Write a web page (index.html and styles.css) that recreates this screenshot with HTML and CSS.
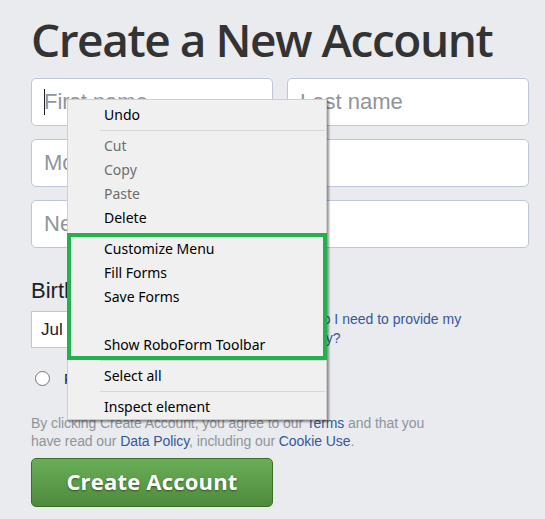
FILE: index.html
```html
<!DOCTYPE html>
<html lang="en">
<head>
<meta charset="utf-8">
<title>Create a New Account</title>
<link rel="stylesheet" href="styles.css">
</head>
<body>
<div class="page">
  <h1 class="title">Create a New Account</h1>
  <div class="fields">
    <div class="field">
      <input class="input" type="text" placeholder="First name">
      <span class="caret"></span>
    </div>
    <div class="field">
      <input class="input" type="text" placeholder="Last name">
    </div>
    <div class="field wide">
      <input class="input" type="text" placeholder="Mobile number or email">
    </div>
    <div class="field wide">
      <input class="input" type="password" placeholder="New password">
    </div>
  </div>
  <div class="label">Birthday</div>
  <div class="bday-row">
    <div class="selects">
      <div class="select month">Jul</div>
      <div class="select day">7</div>
      <div class="select year">1990</div>
    </div>
    <a class="link why" href="#">Why do I need to provide my birthday?</a>
  </div>
  <div class="gender-row">
    <label class="gender"><span class="radio"></span><span class="gender-text">Female</span></label>
    <label class="gender"><span class="radio"></span><span class="gender-text">Male</span></label>
  </div>
  <p class="terms">By clicking Create Account, you agree to our <a class="link" href="#">Terms</a> and that you have read our <a class="link" href="#">Data Policy</a>, including our <a class="link" href="#">Cookie Use</a>.</p>
  <button class="submit" type="button">Create Account</button>
</div>

<div class="menu">
  <div class="item">Undo</div>
  <div class="sep"></div>
  <div class="item disabled">Cut</div>
  <div class="item disabled">Copy</div>
  <div class="item disabled">Paste</div>
  <div class="item">Delete</div>
  <div class="sep"></div>
  <div class="item">Customize Menu</div>
  <div class="item">Fill Forms</div>
  <div class="item">Save Forms</div>
  <div class="item"></div>
  <div class="item">Show RoboForm Toolbar</div>
  <div class="sep"></div>
  <div class="item">Select all</div>
  <div class="sep"></div>
  <div class="item">Inspect element</div>
  <div class="highlight"></div>
</div>
</body>
</html>
```

FILE: styles.css
```css
html, body {
  margin: 0;
  padding: 0;
}
body {
  background: #e9ebee;
  font-family: "Liberation Sans", Arial, sans-serif;
  color: #1d2129;
  width: 545px;
  height: 519px;
  overflow: hidden;
  position: relative;
}
.page {
  padding: 0 16px 0 31px;
}
.title {
  margin: 8px 0 0;
  font-family: "Open Sans", sans-serif;
  font-weight: 600;
  font-size: 46px;
  line-height: 62px;
  letter-spacing: -1.45px;
  color: #333;
  white-space: nowrap;
}
.fields {
  margin-top: 8px;
  display: grid;
  grid-template-columns: 242px 242px;
  column-gap: 14px;
  row-gap: 13px;
}
.field {
  position: relative;
  height: 48px;
}
.field.wide {
  grid-column: 1 / span 2;
}
.input {
  box-sizing: border-box;
  width: 100%;
  height: 48px;
  margin: 0;
  border: 1px solid #bdc7d8;
  border-radius: 5px;
  background: #fff;
  padding: 0 12px;
  font-family: "Liberation Sans", Arial, sans-serif;
  font-size: 22px;
  color: #1d2129;
  outline: none;
}
.input::placeholder {
  color: #90949c;
}
.caret {
  position: absolute;
  left: 13px;
  top: 11px;
  width: 1px;
  height: 26px;
  background: #1d2129;
}
.label {
  margin-top: 30px;
  font-size: 22px;
  line-height: 26px;
  color: #1d2129;
}
.bday-row {
  margin-top: 6px;
  display: flex;
  align-items: center;
  height: 38px;
}
.selects {
  width: 252px;
  display: flex;
  gap: 6px;
}
.select {
  box-sizing: border-box;
  height: 37px;
  border: 1px solid #bdc7d8;
  background: #fff;
  font-size: 17px;
  line-height: 35px;
  padding-left: 9px;
  color: #1d2129;
}
.month { width: 70px; }
.day { width: 60px; }
.year { width: 80px; }
.link {
  color: #365899;
  text-decoration: none;
}
.why {
  font-size: 14px;
  line-height: 19px;
  width: 190px;
}
.gender-row {
  margin-top: 20px;
  height: 20px;
  display: flex;
  align-items: center;
  gap: 20px;
}
.gender {
  display: flex;
  align-items: center;
  gap: 14px;
  font-size: 15px;
  color: #1d2129;
}
.radio {
  box-sizing: border-box;
  width: 15px;
  height: 15px;
  margin-left: 4px;
  border: 1px solid #767676;
  border-radius: 50%;
  background: #fff;
}
.terms {
  margin: 26px 0 0;
  width: 400px;
  font-size: 14px;
  line-height: 18px;
  letter-spacing: -0.08px;
  color: #90949c;
}
.submit {
  margin-top: 8px;
  box-sizing: border-box;
  width: 242px;
  height: 49px;
  border: 1px solid #3b6e22;
  border-radius: 5px;
  background: linear-gradient(#6aae57, #4f8a3c);
  color: #fff;
  font-family: "Open Sans", sans-serif;
  font-weight: 700;
  font-size: 22px;
  letter-spacing: 0.2px;
  text-shadow: 0 1px 2px rgba(0, 0, 0, 0.45);
  padding: 0 0 3px;
  display: block;
}

/* context menu overlay */
.menu {
  position: absolute;
  left: 67px;
  top: 99px;
  width: 260px;
  box-sizing: border-box;
  background: #f0f0f0;
  border: 1px solid #cfcfcf;
  padding: 3px 0 0;
  box-shadow: 2px 2px 2px rgba(0, 0, 0, 0.4);
  font-family: "Noto Sans", "Open Sans", sans-serif;
  font-size: 14px;
  color: #000;
}
.item {
  height: 24px;
  line-height: 24px;
  padding-left: 36px;
  white-space: nowrap;
}
.item.disabled {
  color: #6d6d6d;
}
.sep {
  height: 1px;
  margin: 3px 1px 3px 32px;
  background: #d7d7d7;
}
.highlight {
  position: absolute;
  left: -1px;
  top: 133px;
  width: 260px;
  height: 127px;
  box-sizing: border-box;
  border: 4px solid #22b14c;
}
```
